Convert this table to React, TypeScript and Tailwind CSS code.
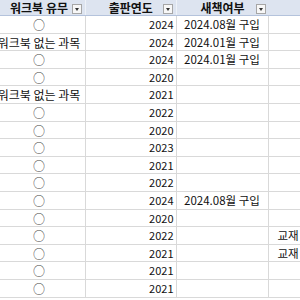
import React from 'react';

const rows = [
  { wb: '○', year: '2024', buy: '2024.08월 구입', note: '' },
  { wb: '워크북 없는 과목', year: '2024', buy: '2024.01월 구입', note: '' },
  { wb: '○', year: '2024', buy: '2024.01월 구입', note: '' },
  { wb: '○', year: '2020', buy: '', note: '' },
  { wb: '워크북 없는 과목', year: '2021', buy: '', note: '' },
  { wb: '○', year: '2022', buy: '', note: '' },
  { wb: '○', year: '2020', buy: '', note: '' },
  { wb: '○', year: '2023', buy: '', note: '' },
  { wb: '○', year: '2021', buy: '', note: '' },
  { wb: '○', year: '2022', buy: '', note: '' },
  { wb: '○', year: '2024', buy: '2024.08월 구입', note: '' },
  { wb: '○', year: '2020', buy: '', note: '' },
  { wb: '○', year: '2022', buy: '', note: '교재 없음' },
  { wb: '○', year: '2021', buy: '', note: '교재 없음' },
  { wb: '○', year: '2021', buy: '', note: '' },
  { wb: '○', year: '2021', buy: '', note: '' },
];

const FilterButton: React.FC = () => (
  <div className="absolute right-[3px] top-[4px] w-[10px] h-[10px] border border-[#a6a6a6] bg-[#f7f7f7] flex items-center justify-center">
    <div className="w-0 h-0 border-l-[2.5px] border-r-[2.5px] border-t-[3px] border-l-transparent border-r-transparent border-t-[#333]" />
  </div>
);

const cols = 'grid grid-cols-[93px_90.5px_92px_100px]';

export default function App() {
  return (
    <div
      className="w-[300px] h-[300px] overflow-hidden bg-white text-[#111]"
      style={{ fontFamily: '"Noto Sans CJK KR", "Noto Sans", sans-serif' }}
    >
      <div className="ml-[-7px]">
        <div className={`${cols} h-[16px] bg-[#dde4f0] border-b border-[#b4c3dc] text-[12px] font-bold leading-[15px]`}>
          <div className="relative text-center px-[6px] border-r border-[#eef2f8]">
            워크북 유무
            <FilterButton />
          </div>
          <div className="relative text-center border-r border-[#eef2f8]">
            출판연도
            <FilterButton />
          </div>
          <div className="relative text-center">
            새책여부
            <FilterButton />
          </div>
          <div />
        </div>
        {rows.map((r, i) => (
          <div key={i} className={`${cols} h-[17.6px] border-b border-[#d9d9d9] text-[11px] leading-[17px]`}>
            <div className="text-center text-[12px] whitespace-nowrap border-r border-[#d9d9d9]">
              {r.wb === '○' ? <span className="text-[#444]">{r.wb}</span> : r.wb}
            </div>
            <div className="text-right pr-[2px] border-r border-[#d9d9d9]">{r.year}</div>
            <div className="text-center text-[11.5px] whitespace-nowrap border-r border-[#d9d9d9]">{r.buy}</div>
            <div className="pl-[9px] text-[11.5px] whitespace-nowrap">{r.note}</div>
          </div>
        ))}
      </div>
    </div>
  );
}
